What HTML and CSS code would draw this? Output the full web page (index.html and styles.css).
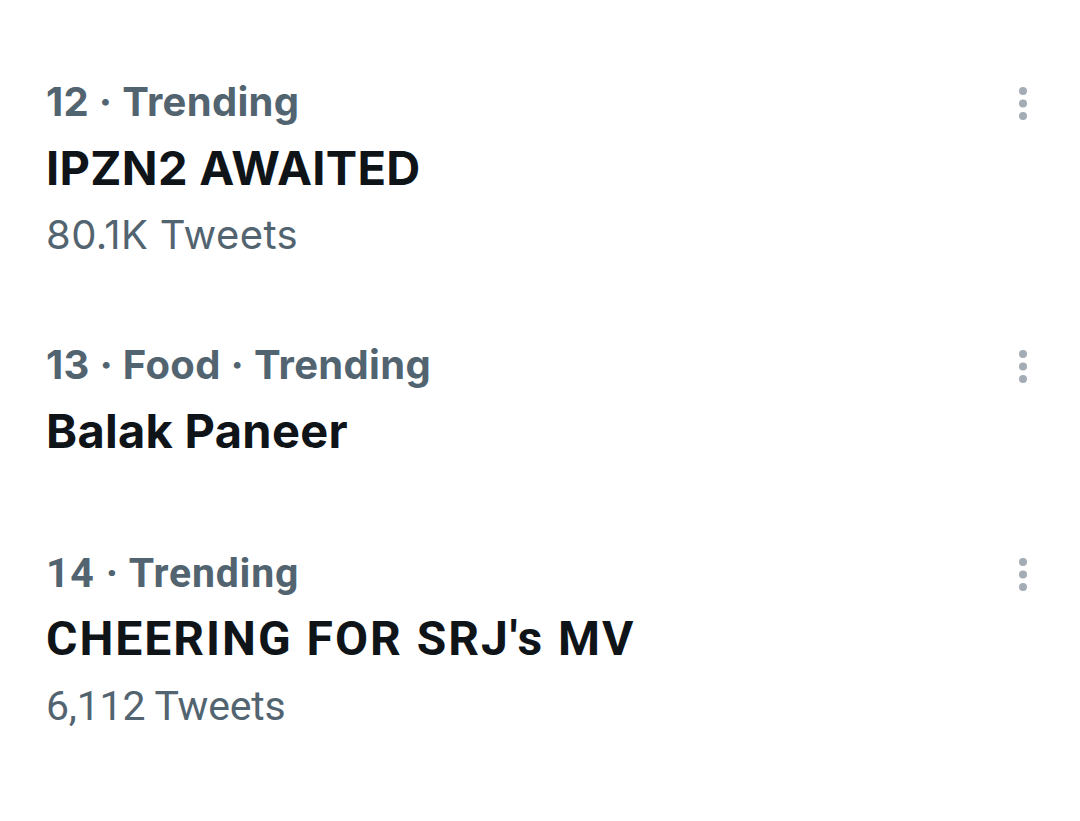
FILE: index.html
```html
<!DOCTYPE html>
<html lang="en">
<head>
<meta charset="utf-8">
<title>Trends</title>
<link rel="stylesheet" href="styles.css">
</head>
<body>
<main class="trends">
  <section class="trend">
    <div class="trend-body">
      <div class="meta">12 · Trending</div>
      <div class="title">IPZN2 AWAITED</div>
      <div class="count">80.1K Tweets</div>
    </div>
    <button class="more" aria-label="More">
      <svg width="8" height="34" viewBox="0 0 8 34"><circle cx="4" cy="4" r="4"/><circle cx="4" cy="16.5" r="4"/><circle cx="4" cy="29" r="4"/></svg>
    </button>
  </section>
  <section class="trend">
    <div class="trend-body">
      <div class="meta">13 · Food · Trending</div>
      <div class="title">Balak Paneer</div>
    </div>
    <button class="more" aria-label="More">
      <svg width="8" height="34" viewBox="0 0 8 34"><circle cx="4" cy="4" r="4"/><circle cx="4" cy="16.5" r="4"/><circle cx="4" cy="29" r="4"/></svg>
    </button>
  </section>
  <section class="trend trend-alt">
    <div class="trend-body">
      <div class="meta">14 · Trending</div>
      <div class="title">CHEERING FOR SRJ's MV</div>
      <div class="count">6,112 Tweets</div>
    </div>
    <button class="more" aria-label="More">
      <svg width="8" height="34" viewBox="0 0 8 34"><circle cx="4" cy="4" r="4"/><circle cx="4" cy="16.5" r="4"/><circle cx="4" cy="29" r="4"/></svg>
    </button>
  </section>
</main>
</body>
</html>
```

FILE: styles.css
```css
html, body {
  margin: 0;
  padding: 0;
  background: #ffffff;
}

body {
  font-family: Inter, "Noto Sans", sans-serif;
  color: #0f1419;
}

.trends {
  display: flex;
  flex-direction: column;
  padding-top: 29px;
}

.trend {
  display: flex;
  align-items: flex-start;
  padding: 42px 45px 37px 46px;
}

.trend-body {
  flex: 1;
  display: flex;
  flex-direction: column;
}

.meta {
  font-size: 40px;
  line-height: 62px;
  font-weight: 700;
  letter-spacing: 0.3px;
  color: #536471;
  white-space: nowrap;
}

.title {
  margin-top: 3px;
  font-size: 47px;
  line-height: 64px;
  font-weight: 700;
  letter-spacing: 0.3px;
  color: #0f1419;
  white-space: nowrap;
}

.count {
  margin-top: 15px;
  font-size: 40px;
  line-height: 40px;
  font-weight: 400;
  letter-spacing: 0.4px;
  color: #536471;
  white-space: nowrap;
}

.trend-alt .meta,
.trend-alt .title,
.trend-alt .count {
  font-family: Roboto, "Liberation Sans", sans-serif;
}

.trend-alt .meta {
  font-size: 41px;
  letter-spacing: 0.8px;
}

.trend-alt .title {
  font-size: 48px;
  letter-spacing: 2px;
}

.trend-alt .count {
  font-size: 41px;
  letter-spacing: -0.2px;
}

.more {
  display: flex;
  align-items: center;
  justify-content: center;
  width: 24px;
  height: 62px;
  margin-top: 2px;
  padding: 0;
  border: 0;
  background: transparent;
  fill: #a3acb4;
}
```
